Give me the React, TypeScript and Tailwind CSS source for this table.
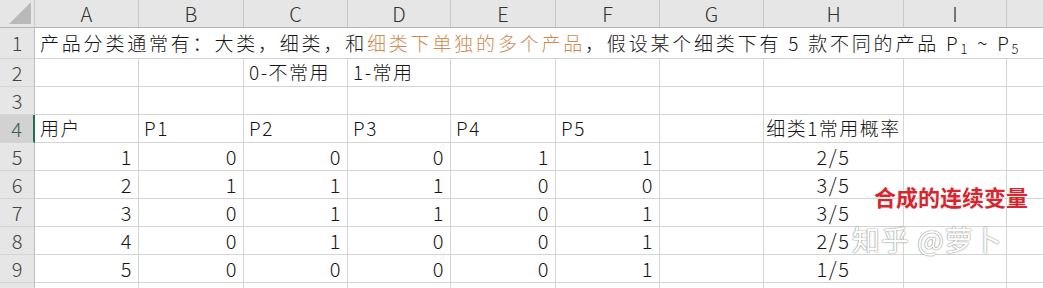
import React from 'react';

const colWidths = [104, 105, 104, 103, 105, 104, 104, 140, 103];
const colNames = ['A', 'B', 'C', 'D', 'E', 'F', 'G', 'H', 'I'];

const data = [
  { user: 1, p: [0, 0, 0, 1, 1], rate: '2/5' },
  { user: 2, p: [1, 1, 1, 0, 0], rate: '3/5' },
  { user: 3, p: [0, 1, 1, 0, 1], rate: '3/5' },
  { user: 4, p: [0, 1, 0, 0, 1], rate: '2/5' },
  { user: 5, p: [0, 0, 0, 0, 1], rate: '1/5' },
];

const font = { fontFamily: '"Noto Sans CJK SC", "Noto Sans", sans-serif' };

const RowHead: React.FC<{ n?: number; active?: boolean; h: string }> = ({ n, active, h }) => (
  <div
    className={`${h} w-[35px] shrink-0 flex items-center justify-center border-b border-[#d4d4d4] text-[20px] tracking-normal ${
      active
        ? 'bg-[#d2d2d2] text-[#3f5f4a] border-r-2 border-r-[#217346]'
        : 'bg-[#e6e6e6] text-[#444] border-r border-r-[#bdbdbd]'
    }`}
  >
    {n}
  </div>
);

const Cell: React.FC<{ w: number; align?: 'left' | 'right' | 'center'; children?: React.ReactNode }> = ({
  w,
  align = 'left',
  children,
}) => (
  <div
    className={`shrink-0 h-full flex items-center border-r border-b border-[#d4d4d4] px-[5px] whitespace-nowrap ${
      align === 'right' ? 'justify-end' : align === 'center' ? 'justify-center' : 'justify-start'
    }`}
    style={{ width: w }}
  >
    {children}
  </div>
);

const Tail = () => <div className="flex-1 h-full border-b border-[#d4d4d4]" />;

export default function App() {
  return (
    <div
      className="relative w-[1043px] h-[288px] overflow-hidden bg-white text-[#161616] text-[19px] font-light tracking-[1.5px]"
      style={font}
    >
      {/* column headers */}
      <div className="flex h-[28px] bg-[#e6e6e6] border-b border-[#b5b5b5] tracking-normal">
        <div className="w-[35px] shrink-0 relative border-r border-[#c8c8c8]">
          <div className="absolute right-[3px] bottom-[3px] w-0 h-0 border-l-[22px] border-l-transparent border-b-[22px] border-b-[#b9b9b9]" />
        </div>
        {colNames.map((c, i) => (
          <div
            key={c}
            className="shrink-0 flex items-center justify-center border-r border-[#c8c8c8] text-[#333] text-[20px]"
            style={{ width: colWidths[i] }}
          >
            {c}
          </div>
        ))}
        <div className="flex-1" />
      </div>

      {/* row 1 */}
      <div className="flex h-[31px]">
        <RowHead n={1} h="h-[31px]" />
        <div className="flex-1 flex items-center border-b border-[#d4d4d4] pl-[5px] whitespace-nowrap tracking-[2.8px]">
          <span>产品分类通常有：大类，细类，和</span>
          <span className="text-[#cf8a50]">细类下单独的多个产品</span>
          <span>，假设某个细类下有 5 款不同的产品 P<sub className="text-[13px]">1</sub> ~ P<sub className="text-[13px]">5</sub></span>
        </div>
      </div>

      {/* row 2 */}
      <div className="flex h-[28px]">
        <RowHead n={2} h="h-[28px]" />
        <Cell w={colWidths[0]} />
        <Cell w={colWidths[1]} />
        <Cell w={colWidths[2]}>0-不常用</Cell>
        <Cell w={colWidths[3]}>1-常用</Cell>
        {colWidths.slice(4).map((w, i) => (
          <Cell key={i} w={w} />
        ))}
        <Tail />
      </div>

      {/* row 3 */}
      <div className="flex h-[28px]">
        <RowHead n={3} h="h-[28px]" />
        {colWidths.map((w, i) => (
          <Cell key={i} w={w} />
        ))}
        <Tail />
      </div>

      {/* row 4 */}
      <div className="flex h-[28px]">
        <RowHead n={4} h="h-[28px]" active />
        <Cell w={colWidths[0]}>用户</Cell>
        {[1, 2, 3, 4, 5].map((n) => (
          <Cell key={n} w={colWidths[n]}>P{n}</Cell>
        ))}
        <Cell w={colWidths[6]} />
        <Cell w={colWidths[7]} align="center">
          细类1常用概率
        </Cell>
        <Cell w={colWidths[8]} />
        <Tail />
      </div>

      {/* rows 5-9 */}
      {data.map((r, ri) => (
        <div key={ri} className="flex h-[28px] text-[20px]">
          <RowHead n={5 + ri} h="h-[28px]" />
          <Cell w={colWidths[0]} align="right">
            {r.user}
          </Cell>
          {r.p.map((v, i) => (
            <Cell key={i} w={colWidths[i + 1]} align="right">
              {v}
            </Cell>
          ))}
          <Cell w={colWidths[6]} />
          <Cell w={colWidths[7]} align="center">
            {r.rate}
          </Cell>
          <Cell w={colWidths[8]} />
          <Tail />
        </div>
      ))}

      {/* row 10, only its top edge shows */}
      <div className="flex h-[28px]">
        <RowHead h="h-[28px]" />
        {colWidths.map((w, i) => (
          <Cell key={i} w={w} />
        ))}
        <Tail />
      </div>

      {/* annotation */}
      <div className="absolute left-[874px] top-[185px] text-[22px] font-bold tracking-normal text-[#d9262e] leading-none whitespace-nowrap [text-shadow:0_0_2px_#fff]">
        合成的连续变量
      </div>

      {/* watermark */}
      <div className="absolute left-[852px] top-[225px] text-[28px] font-normal leading-none whitespace-nowrap text-white tracking-[1px] [text-shadow:0_0_1.5px_#777,0_0_1px_#999]">
        知乎 @萝卜
      </div>
    </div>
  );
}
